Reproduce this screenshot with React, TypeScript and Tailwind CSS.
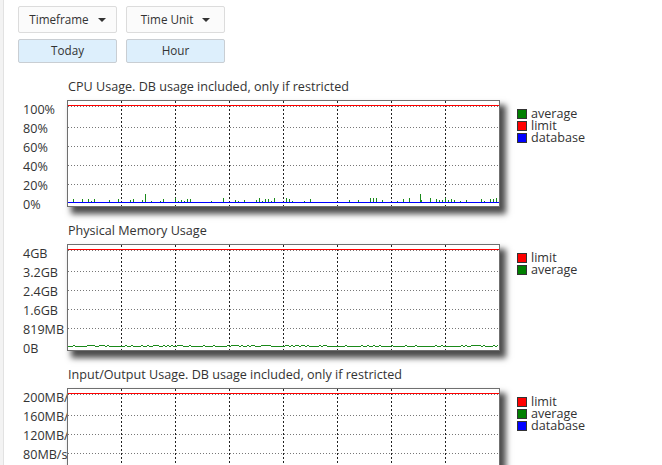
import type { ReactNode } from "react";

const FONT = "font-['Open_Sans','Noto_Sans',sans-serif]";

// inner plot size (inside the 1px frame)
const W = 431;
const H = 105;
const V_LINES = [53, 107, 161, 215, 269, 323, 377];
const H_LINES = [5, 26, 45, 64, 83];

function noise(i: number, seed: number) {
  const v = Math.sin(i * 12.9898 + seed * 78.233) * 43758.5453;
  return v - Math.floor(v);
}

type LegendItem = { label: string; color: string };

function Grid({ children }: { children?: ReactNode }) {
  return (
    <svg width={W} height={H} className="block" shapeRendering="crispEdges">
      {H_LINES.map((y) => (
        <line
          key={`h${y}`}
          x1={0}
          x2={W}
          y1={y + 0.5}
          y2={y + 0.5}
          stroke="#777"
          strokeDasharray="1 2"
        />
      ))}
      {V_LINES.map((x) => (
        <line
          key={`v${x}`}
          x1={x + 0.5}
          x2={x + 0.5}
          y1={0}
          y2={H}
          stroke="#222"
          strokeDasharray="2 2"
        />
      ))}
      <line x1={0} x2={W} y1={4.5} y2={4.5} stroke="#ff0000" />
      {children}
    </svg>
  );
}

function CpuPlot() {
  const spikes: { x: number; h: number }[] = [];
  for (let x = 2; x < W; x += 3) {
    const r = noise(x, 1);
    if (r > 0.62) spikes.push({ x, h: 1 + Math.round(noise(x, 2) * 3) });
  }
  spikes.push({ x: 77, h: 8 }, { x: 352, h: 8 });
  return (
    <Grid>
      {spikes.map((s, i) => (
        <line
          key={i}
          x1={s.x + 0.5}
          x2={s.x + 0.5}
          y1={101 - s.h}
          y2={101}
          stroke="#1a8a1a"
        />
      ))}
      <line x1={0} x2={W} y1={101.5} y2={101.5} stroke="#0000ff" />
    </Grid>
  );
}

function MemoryPlot() {
  let d = "M0 101.5";
  for (let x = 2; x <= W; x += 2) {
    const y = 101.5 - (noise(x, 4) > 0.7 ? 1 : 0);
    d += ` L${x} ${y}`;
  }
  return (
    <Grid>
      <path d={d} fill="none" stroke="#1a8a1a" />
    </Grid>
  );
}

function IoPlot() {
  return <Grid />;
}

function Chart({
  title,
  labels,
  legend,
  children,
}: {
  title: string;
  labels: string[];
  legend: LegendItem[];
  children: ReactNode;
}) {
  return (
    <section className="mb-[14px]">
      <div className="ml-[50px] mb-[4px] h-[19px] leading-[19px]">{title}</div>
      <div className="flex h-[107px] items-start">
        <div className="w-[49px] shrink-0 overflow-hidden whitespace-nowrap pl-[5px] leading-[19px]">
          {labels.map((l) => (
            <div key={l} className="h-[19px]">
              {l}
            </div>
          ))}
        </div>
        <div className="h-[107px] w-[433px] shrink-0 border border-[#6f6f6f] bg-white shadow-[5px_6px_6px_1px_rgba(0,0,0,0.7)]">
          {children}
        </div>
        <div className="ml-[17px] mt-[8px] flex flex-col">
          {legend.map((item) => (
            <div key={item.label} className="flex h-[12px] items-center leading-[12px]">
              <span
                className="mr-[4px] h-[10px] w-[10px] border border-[#333]"
                style={{ backgroundColor: item.color }}
              />
              <span>{item.label}</span>
            </div>
          ))}
        </div>
      </div>
    </section>
  );
}

function DropButton({ label }: { label: string }) {
  return (
    <button
      type="button"
      className="flex h-[27px] items-center justify-center rounded-[2px] border border-[#dcdcdc] bg-[#fbfbfb] text-[11.7px]"
    >
      {label}
      <span className="ml-[9px] h-0 w-0 border-x-[4px] border-t-[4px] border-x-transparent border-t-[#333]" />
    </button>
  );
}

function ValueButton({ label }: { label: string }) {
  return (
    <button
      type="button"
      className="flex h-[24px] items-center justify-center rounded-[2px] border border-[#c9ced3] bg-[#ddeffc] text-[11.7px]"
    >
      {label}
    </button>
  );
}

const GREEN = "#008000";
const RED = "#ff0000";
const BLUE = "#0000ff";

export default function App() {
  return (
    <div className={`flex min-h-screen bg-white text-[12.6px] text-[#333] ${FONT}`}>
      <div className="w-[4px] shrink-0 border-r border-[#e2e2e2] bg-[#f3f3f3]" />
      <div className="pl-[14px] pt-[6px]">
        <div className="grid grid-cols-[99px_99px] gap-x-[9px] gap-y-[6px]">
          <DropButton label="Timeframe" />
          <DropButton label="Time Unit" />
          <ValueButton label="Today" />
          <ValueButton label="Hour" />
        </div>

        <div className="mt-[14px]">
          <Chart
            title="CPU Usage. DB usage included, only if restricted"
            labels={["100%", "80%", "60%", "40%", "20%", "0%"]}
            legend={[
              { label: "average", color: GREEN },
              { label: "limit", color: RED },
              { label: "database", color: BLUE },
            ]}
          >
            <CpuPlot />
          </Chart>

          <Chart
            title="Physical Memory Usage"
            labels={["4GB", "3.2GB", "2.4GB", "1.6GB", "819MB", "0B"]}
            legend={[
              { label: "limit", color: RED },
              { label: "average", color: GREEN },
            ]}
          >
            <MemoryPlot />
          </Chart>

          <Chart
            title="Input/Output Usage. DB usage included, only if restricted"
            labels={["200MB/s", "160MB/s", "120MB/s", "80MB/s", "40MB/s", "0B/s"]}
            legend={[
              { label: "limit", color: RED },
              { label: "average", color: GREEN },
              { label: "database", color: BLUE },
            ]}
          >
            <IoPlot />
          </Chart>
        </div>
      </div>
    </div>
  );
}
